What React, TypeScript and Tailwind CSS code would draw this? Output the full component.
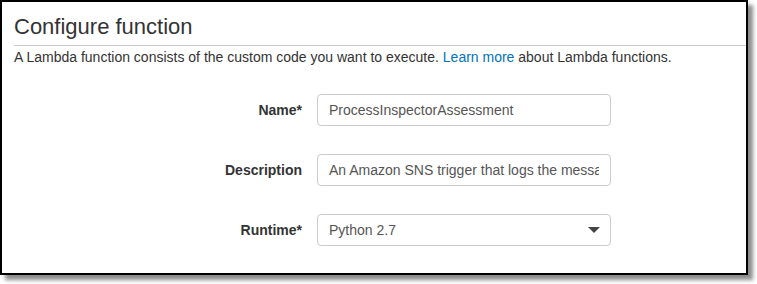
export default function App() {
  const rows = [
    { label: "Name*", value: "ProcessInspectorAssessment" },
    { label: "Description", value: "An Amazon SNS trigger that logs the message pushed to the SNS topic." },
  ];

  return (
    <div className="w-[757px] h-[284px] bg-white" style={{ fontFamily: '"Liberation Sans", Arial, sans-serif' }}>
      <div className="w-[748px] h-[275px] border-2 border-black bg-white shadow-[5px_5px_4px_rgba(0,0,0,0.45)] overflow-hidden">
        <div className="pl-[12px] pt-[11px]">
          <h2 className="text-[22px] leading-[28px] text-[#333]">Configure function</h2>
          <div className="mt-[4px] border-t border-[#ccc]" />
          <p className="mt-[2px] text-[14px] leading-[18px] text-[#333]">
            A Lambda function consists of the custom code you want to execute.{" "}
            <span className="text-[#0073bb]">Learn more</span> about Lambda functions.
          </p>

          <div className="mt-[28px] flex flex-col gap-[28px]">
            {rows.map((row) => (
              <div key={row.label} className="flex items-center">
                <label className="w-[303px] pr-[15px] text-right text-[14px] font-bold text-[#333]">{row.label}</label>
                <input
                  readOnly
                  value={row.value}
                  className="w-[294px] h-[32px] border border-[#ccc] rounded-[4px] px-[11px] text-[14px] text-[#555] outline-none"
                />
              </div>
            ))}
            <div className="flex items-center">
              <label className="w-[303px] pr-[15px] text-right text-[14px] font-bold text-[#333]">Runtime*</label>
              <div className="w-[294px] h-[32px] border border-[#ccc] rounded-[4px] pl-[11px] pr-[10px] flex items-center justify-between text-[14px] text-[#555]">
                <span>Python 2.7</span>
                <svg width="12" height="7" viewBox="0 0 12 7">
                  <path d="M0 0 L12 0 L6 6 Z" fill="#444" />
                </svg>
              </div>
            </div>
          </div>
        </div>
      </div>
    </div>
  );
}
